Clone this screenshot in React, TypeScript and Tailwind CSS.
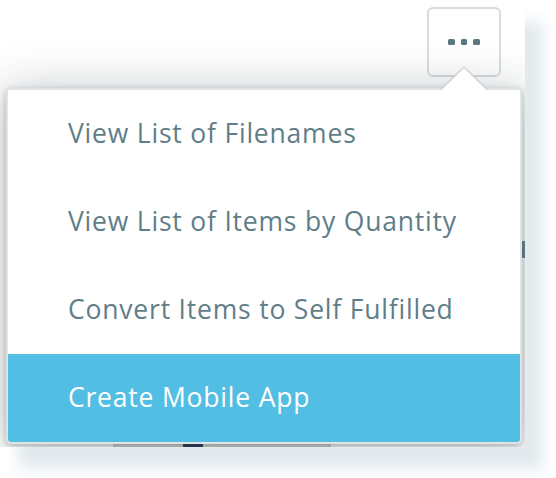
import React from "react";

const items = [
  "View List of Filenames",
  "View List of Items by Quantity",
  "Convert Items to Self Fulfilled",
  "Create Mobile App",
];

export default function App() {
  return (
    <div
      className="relative w-[556px] h-[478px] bg-white overflow-hidden"
      style={{ fontFamily: "'Open Sans', 'Noto Sans', sans-serif" }}
    >
      {/* page card */}
      <div className="absolute left-0 top-0 w-[525px] h-[447px] bg-white overflow-hidden shadow-[18px_22px_14px_#e2eaee]">
        {/* page content hints behind the menu */}
        <div className="absolute left-[521px] top-[241px] w-[4px] h-[17px] rounded-l-[2px] bg-[#6d8994]" />
        <div className="absolute left-[113px] top-[440px] w-[218px] h-[10px] flex">
          <div className="w-[70px] bg-[#d6d6d0]" />
          <div className="w-[20px] bg-[#2a3e58]" />
          <div className="w-[12px] bg-[#d9e0d0]" />
          <div className="flex-1 bg-[#d6d6d0]" />
        </div>

        {/* more button */}
        <div className="absolute left-[427px] top-[7px] w-[74px] h-[70px] rounded-[6px] border-2 border-[#d7dcde] bg-white flex items-center justify-center gap-[6px]">
          <span className="w-[7px] h-[6px] rounded-[1.5px] bg-[#5b7781]" />
          <span className="w-[6px] h-[6px] rounded-[1.5px] bg-[#5b7781]" />
          <span className="w-[7px] h-[6px] rounded-[1.5px] bg-[#5b7781]" />
        </div>

        {/* menu */}
        <div className="absolute left-[6px] top-[88px] w-[516px] rounded-[5px] border-2 border-[#e1e4e5] bg-white shadow-[0_2px_7px_rgba(20,35,45,0.28),0_3px_48px_rgba(20,35,45,0.28)] overflow-hidden">
          {items.map((t, i) => (
            <div
              key={t}
              className={
                i === 3
                  ? "h-[88px] flex items-center pl-[60px] bg-[#52bee3] text-white text-[26.5px] tracking-[0.8px]"
                  : "h-[88px] flex items-center pl-[60px] bg-white text-[#5f7e88] text-[26.5px] tracking-[0.8px]"
              }
            >
              {t}
            </div>
          ))}
        </div>

        {/* caret */}
        <svg
          className="absolute left-[440px] top-[66px]"
          width="48"
          height="25"
          viewBox="0 0 48 25"
        >
          <polygon points="0,25 24,1 48,25" fill="#ffffff" />
          <polyline
            points="1,23.5 24,1 47,23.5"
            fill="none"
            stroke="#cdd2d4"
            strokeWidth="1.5"
          />
        </svg>
      </div>
    </div>
  );
}
